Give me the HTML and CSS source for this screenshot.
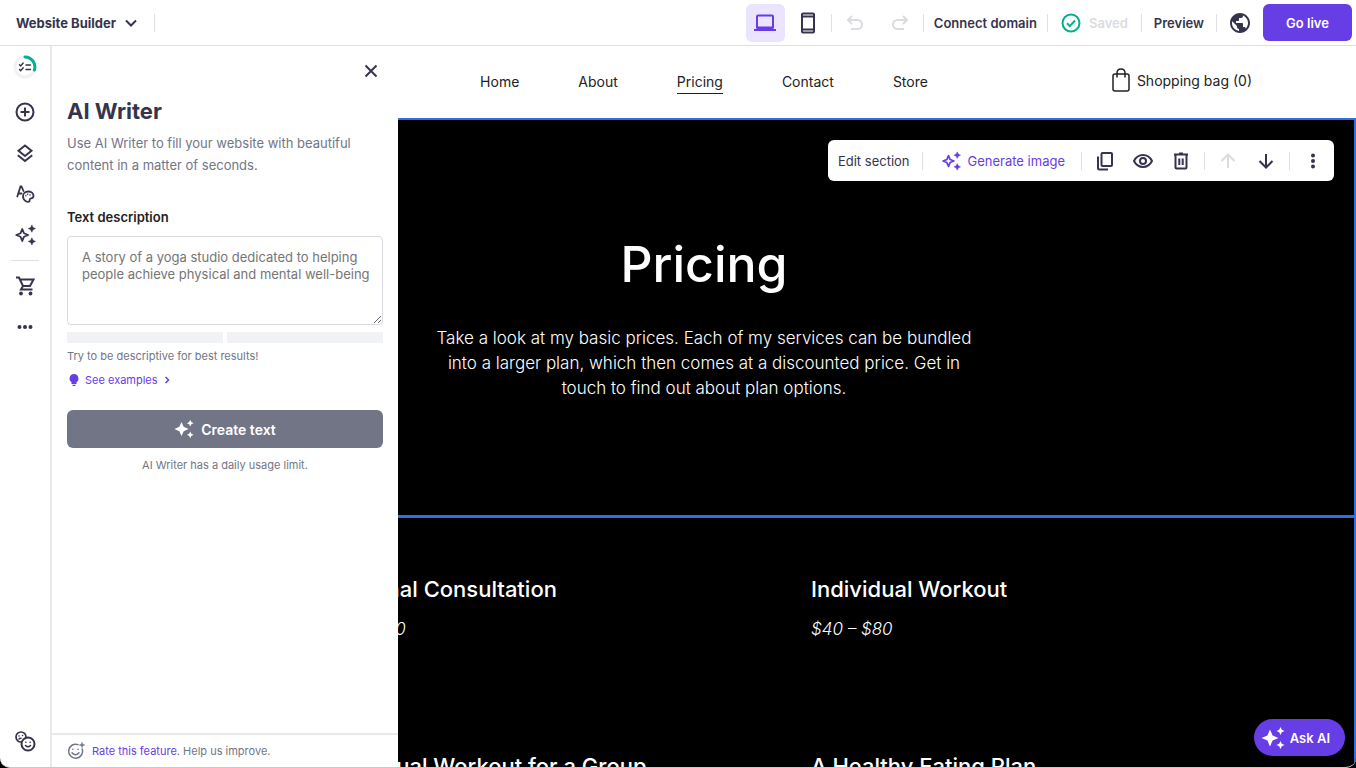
FILE: index.html
```html
<!DOCTYPE html>
<html lang="en">

<head>
    <meta charset="UTF-8">
    <meta name="viewport" content="width=device-width, initial-scale=1.0">
    <title>Website Builder</title>
    <link rel="stylesheet" href="styles.css">
</head>

<body>

    <!-- shared icon shapes -->
    <svg class="sprite" aria-hidden="true">
        <symbol id="sparkle-line" viewBox="0 0 24 24">
            <path d="M9 5.5l1.900 4.600L15.500 12l-4.600 1.900L9 18.500l-1.900-4.600L2.500 12l4.600-1.900z" fill="none" stroke="currentColor" stroke-width="2" stroke-linejoin="round" />
            <path d="M19.500 1l1.300 2.700L23.500 5l-2.700 1.300L19.500 9l-1.300-2.700L15.500 5l2.700-1.300zM19.500 15l1.300 2.700 2.700 1.300-2.700 1.300-1.300 2.700-1.300-2.700-2.700-1.300 2.700-1.300z" fill="currentColor" stroke="currentColor" stroke-width=".5" />
        </symbol>
        <symbol id="sparkle-solid" viewBox="0 0 24 24">
            <path d="M9 3.500l2.600 5.900L17.500 12l-5.900 2.600L9 20.500l-2.600-5.900L.5 12l5.900-2.600z" fill="currentColor" />
            <path d="M19.500 1l1.300 2.700L23.500 5l-2.700 1.300L19.500 9l-1.300-2.700L15.500 5l2.700-1.300zM19.500 15l1.300 2.700 2.700 1.300-2.700 1.300-1.300 2.700-1.300-2.700-2.700-1.300 2.700-1.300z" fill="currentColor" />
        </symbol>
    </svg>

    <div class="app">
        <header class="topbar">
            <button class="brand">Website Builder
                <svg width="12" height="8" viewBox="0 0 12 8"><path d="M1 1.500l5 5 5-5" class="line" /></svg>
            </button>
            <span class="sep"></span>

            <div class="topbar-right">
                <button class="device active" aria-label="Desktop">
                    <svg width="24" height="24" viewBox="0 0 24 24"><path d="M4 17V5.500q0-1 1-1h14q1 0 1 1V17" class="line" /><path d="M3.500 15.500h17V18H23v2H1v-2h2.500z" fill="currentColor" /></svg>
                </button>
                <button class="device" aria-label="Mobile">
                    <svg width="24" height="24" viewBox="0 0 24 24"><rect x="6" y="2.500" width="12" height="19" rx="1" class="line" /><path d="M6 5.500h12M6 18.500h12" class="line" /></svg>
                </button>
                <span class="sep"></span>
                <div class="history">
                    <button class="tool off" aria-label="Undo">
                        <svg width="20" height="20" viewBox="0 0 20 20"><path d="M7 3L3 7l4 4M3 7h9.500a4.500 4.500 0 0 1 0 9H6" class="line" /></svg>
                    </button>
                    <button class="tool off" aria-label="Redo">
                        <svg width="20" height="20" viewBox="0 0 20 20"><path d="M13 3l4 4-4 4M17 7H7.500a4.500 4.500 0 0 0 0 9H14" class="line" /></svg>
                    </button>
                </div>
                <span class="sep"></span>
                <button>Connect domain</button>
                <span class="sep"></span>
                <span class="saved">
                    <svg width="20" height="20" viewBox="0 0 20 20"><circle cx="10" cy="10" r="8.500" class="line" /><path d="M6 10.300l2.800 2.800L14 7.500" class="line" /></svg>
                    Saved
                </span>
                <span class="sep"></span>
                <button class="preview">Preview</button>
                <span class="sep"></span>
                <button class="tool" aria-label="Language">
                    <svg width="24" height="24" viewBox="0 0 24 24"><path d="M12 2C6.480 2 2 6.480 2 12s4.480 10 10 10 10-4.480 10-10S17.520 2 12 2zm-1 17.930c-3.950-.49-7-3.850-7-7.930 0-.62.080-1.210.210-1.790L9 15v1c0 1.100.9 2 2 2v1.930zm6.900-2.540c-.26-.81-1-1.390-1.900-1.390h-1v-3c0-.55-.45-1-1-1H8v-2h2c.55 0 1-.45 1-1V7h2c1.100 0 2-.9 2-2v-.41c2.930 1.190 5 4.060 5 7.410 0 2.080-.8 3.970-2.100 5.390z" fill="currentColor" /></svg>
                </button>
                <button class="golive">Go live</button>
            </div>
        </header>

        <div class="workspace">
            <nav class="rail" aria-label="Editor tools">
                <button class="checklist" aria-label="Setup checklist">
                    <svg width="24" height="24" viewBox="0 0 24 24" fill="none" stroke-linecap="round"><circle cx="12" cy="12" r="10" stroke="#f1f1f6" stroke-width="3" /><path d="M12 2a10 10 0 0 1 9.400 13" stroke="#00b090" stroke-width="3" /><path d="M6.500 9.800l1.200 1.200 2.500-3M6.500 14.500l1.200 1.200 2.500-3M13 10h4.500M13 14.500h4.500" stroke="currentColor" stroke-width="1.400" /></svg>
                </button>
                <button aria-label="Add elements">
                    <svg width="24" height="24" viewBox="0 0 24 24"><circle cx="12" cy="12" r="8.500" class="line" /><path d="M12 7.500v9M7.500 12h9" class="line" /></svg>
                </button>
                <button aria-label="Pages">
                    <svg width="24" height="24" viewBox="0 0 24 24"><path d="M12 4.500l6.500 5.200L12 15 5.500 9.700zM4.800 14.200L12 20l7.200-5.800" class="line" /></svg>
                </button>
                <button aria-label="Styles">
                    <svg width="24" height="24" viewBox="0 0 24 24" fill="none" stroke="currentColor" stroke-width="1.800" stroke-linecap="round"><path d="M4.300 14.500L7.500 4.500h1l2 4.500M5.500 11.500h3" /><path d="M15 9.500c3.300 0 5.500 2 5.500 4.300 0 1.700-1.200 2.500-2.500 2.500-1.600 0-1.200 1.500-1.500 2.700-.3 1.100-2.200 1.100-3.600.2-1.600-1-2.900-2.700-2.900-4.700 0-2.800 2.200-5 5-5z" /><path d="M12.800 13.800h.1M14.600 12.300h.1M17 13h.1" stroke-width="1.500" /></svg>
                </button>
                <button aria-label="AI tools">
                    <svg width="22" height="22"><use href="#sparkle-line" /></svg>
                </button>
                <hr>
                <button aria-label="Store">
                    <svg width="24" height="24" viewBox="0 0 24 24"><path d="M3 3.500h3l4 8.500h7l3.500-6.500H7M10 12l-2 3.500h11.500" class="line" /><circle cx="8" cy="19.500" r="1.900" fill="currentColor" /><circle cx="17.500" cy="19.500" r="1.900" fill="currentColor" /></svg>
                </button>
                <button aria-label="More">
                    <svg width="24" height="24" viewBox="0 0 24 24" fill="currentColor"><circle cx="6.500" cy="12" r="2" /><circle cx="12" cy="12" r="2" /><circle cx="17.500" cy="12" r="2" /></svg>
                </button>
                <button class="rail-last" aria-label="Feedback">
                    <svg width="24" height="24" viewBox="0 0 24 24" fill="none" stroke="currentColor" stroke-linecap="round"><circle cx="8" cy="8" r="5" stroke-width="1.700" /><path d="M6 7h.1M9.500 6.500h.1M6 10q1-1 2-.8" stroke-width="1.500" /><circle cx="15" cy="15" r="6.500" fill="#fff" stroke-width="2" /><path d="M12.800 13.300h.1M17.100 13.300h.1M12.500 16.500q2.500 2.600 5 0" stroke-width="1.600" /></svg>
                </button>
            </nav>

            <main class="stage">
                <div class="site-header">
                    <nav class="site-nav" aria-label="Site">
                        <a href="#">Home</a>
                        <a href="#">About</a>
                        <a href="#" class="current">Pricing</a>
                        <a href="#">Contact</a>
                        <a href="#">Store</a>
                    </nav>
                    <a href="#" class="bag">
                        <svg width="18" height="24" viewBox="0 0 18 24" fill="none" stroke="currentColor" stroke-width="1.500"><rect x="1" y="6" width="16" height="17" rx="2" /><path d="M5 9.500V5q0-4 4-4t4 4v4.500" /></svg>
                        Shopping bag (0)
                    </a>
                </div>

                <section class="hero">
                    <h1>Pricing</h1>
                    <p>Take a look at my basic prices. Each of my services can be bundled<br>into a larger plan, which then comes at a discounted price. Get in<br>touch to find out about plan options.</p>

                    <div class="section-menu">
                        <button class="edit">Edit section</button>
                        <span class="sep"></span>
                        <button class="generate"><svg width="20" height="20"><use href="#sparkle-line" /></svg>Generate image</button>
                        <span class="sep"></span>
                        <button class="icon" aria-label="Duplicate">
                            <svg width="20" height="20" viewBox="0 0 20 20"><rect x="6.500" y="2" width="10.500" height="13" rx="1" class="line" /><path d="M3 5.500V17q0 1.500 1.500 1.500H13" class="line" /></svg>
                        </button>
                        <button class="icon" aria-label="Hide">
                            <svg width="20" height="20" viewBox="0 0 20 20"><path d="M1 10q3-6 9-6t9 6q-3 6-9 6t-9-6z" class="line" /><circle cx="10" cy="10" r="3" class="line" /></svg>
                        </button>
                        <button class="icon" aria-label="Delete">
                            <svg width="20" height="20" viewBox="0 0 20 20"><path d="M4.500 4v12.500q0 1 1 1h9q1 0 1-1V4M3 3.500h14M8 2.500h4M8.300 7.500v6.500M11.700 7.500v6.500" class="line" /></svg>
                        </button>
                        <span class="sep"></span>
                        <button class="icon off" aria-label="Move up">
                            <svg width="20" height="20" viewBox="0 0 20 20"><path d="M10 17V3.500M3.500 10L10 3.500l6.500 6.500" class="line" /></svg>
                        </button>
                        <button class="icon" aria-label="Move down">
                            <svg width="20" height="20" viewBox="0 0 20 20"><path d="M10 3v13.500M3.500 10l6.500 6.500 6.500-6.500" class="line" /></svg>
                        </button>
                        <span class="sep"></span>
                        <button class="icon" aria-label="More actions">
                            <svg width="20" height="20" viewBox="0 0 20 20" fill="currentColor"><circle cx="10" cy="4.500" r="2" /><circle cx="10" cy="10" r="2" /><circle cx="10" cy="15.500" r="2" /></svg>
                        </button>
                    </div>
                </section>

                <section class="plans">
                    <article>
                        <h2>Personal Consultation</h2>
                        <p>$50 – $70</p>
                    </article>
                    <article>
                        <h2>Individual Workout</h2>
                        <p>$40 – $80</p>
                    </article>
                    <article>
                        <h2>Individual Workout for a Group</h2>
                    </article>
                    <article>
                        <h2>A Healthy Eating Plan</h2>
                    </article>
                </section>

                <aside class="panel">
                    <button class="close" aria-label="Close">
                        <svg width="14" height="14" viewBox="0 0 14 14"><path d="M1.500 1.500l11 11M12.500 1.500l-11 11" class="line" /></svg>
                    </button>
                    <form class="writer">
                        <h2>AI Writer</h2>
                        <p class="intro">Use AI Writer to fill your website with beautiful<br>content in a matter of seconds.</p>
                        <label for="description">Text description</label>
                        <textarea id="description" placeholder="A story of a yoga studio dedicated to helping people achieve physical and mental well-being"></textarea>
                        <div class="strength"><span></span><span></span></div>
                        <p class="hint">Try to be descriptive for best results!</p>
                        <a href="#" class="examples">
                            <svg width="14" height="14" viewBox="0 0 14 14" fill="currentColor"><path d="M7 1a4.500 4.500 0 0 1 2.500 8.200V11h-5V9.200A4.500 4.500 0 0 1 7 1zM5.500 11.800h3v1.200h-3z" /></svg>
                            See examples
                            <svg class="next" width="6" height="8" viewBox="0 0 6 8"><path d="M1.500 1l3 3-3 3" fill="none" stroke="currentColor" stroke-width="1.500" /></svg>
                        </a>
                        <button type="button" class="create"><svg width="20" height="20"><use href="#sparkle-solid" /></svg>Create text</button>
                        <p class="limit">AI Writer has a daily usage limit.</p>
                    </form>
                    <footer>
                        <svg width="18" height="18" viewBox="0 0 18 18" fill="none" stroke="currentColor" stroke-width="1.500" stroke-linecap="round"><path d="M11 2.600A7 7 0 1 0 15.300 7M15 1v4M13 3h4M5.800 7.300h.1M11 7.300h.1M5 10.800q3.500 4 7 0" /></svg>
                        <span><a href="#">Rate this feature</a>. Help us improve.</span>
                    </footer>
                </aside>
            </main>
        </div>

        <button class="ask"><svg width="24" height="24"><use href="#sparkle-solid" /></svg>Ask AI</button>
    </div>

</body>

</html>
```
FILE: styles.css
```css
* {
    box-sizing: border-box;
}

body {
    margin: 0;
    background: #000;
    color: #36344d;
    font-family: Inter, "Liberation Sans", sans-serif;
    font-size: 13px;
}

button {
    display: flex;
    align-items: center;
    padding: 0;
    border: 0;
    background: none;
    color: inherit;
    font: inherit;
    cursor: pointer;
}

a {
    color: inherit;
    text-decoration: none;
}

h1,
h2,
p {
    margin: 0;
}

svg {
    display: block;
    flex: none;
}

.sprite {
    position: absolute;
    width: 0;
    height: 0;
}

.line {
    fill: none;
    stroke: currentColor;
    stroke-width: 2;
}

.sep {
    width: 1px;
    height: 18px;
    background: #dfe0e6;
}

.off {
    color: #dadce0;
}

.app {
    display: flex;
    flex-direction: column;
    height: 100vh;
    overflow: hidden;
    border-bottom: 1px solid #c8c8c8;
    border-radius: 0 0 10px 10px;
    background: #fff;
}

/* top bar */
.topbar {
    display: flex;
    align-items: center;
    flex: none;
    gap: 17px;
    height: 46px;
    padding: 0 4px 0 16px;
    border-bottom: 1px solid #dedee3;
    font-weight: 600;
}

.brand {
    gap: 9px;
    font-weight: 700;
}

.topbar-right {
    display: flex;
    align-items: center;
    gap: 10px;
    margin-left: auto;
}

.device {
    justify-content: center;
    width: 39px;
    height: 38px;
    border-radius: 6px;
}

.device + .device {
    width: 26px;
}

.device.active {
    background: #ebe4ff;
    color: #673de6;
}

.history {
    display: flex;
    gap: 19px;
}

.tool {
    justify-content: center;
    width: 26px;
}

.saved {
    display: flex;
    align-items: center;
    gap: 8px;
    padding: 0 3px;
    color: #dadce0;
}

.saved svg {
    color: #00b090;
}

.preview {
    padding: 0 2px;
}

.golive {
    justify-content: center;
    width: 89px;
    height: 37px;
    border-radius: 6px;
    background: #673de6;
    color: #fff;
}

/* left rail */
.workspace {
    display: flex;
    flex: 1;
    min-height: 0;
}

.rail {
    display: flex;
    flex-direction: column;
    align-items: center;
    flex: none;
    gap: 17px;
    width: 52px;
    padding: 9px 0 14px;
    border-right: 2px solid #e9e9ed;
}

.rail button {
    justify-content: center;
    width: 24px;
    height: 24px;
}

.rail .checklist {
    margin-bottom: 4px;
}

.rail hr {
    width: 28px;
    height: 1px;
    margin: -4px 0;
    border: 0;
    background: #dfe0e6;
}

.rail .rail-last {
    margin-top: auto;
}

/* edited site */
.stage {
    position: relative;
    display: flex;
    flex-direction: column;
    flex: 1;
    min-width: 0;
    overflow: hidden;
    background: #000;
    color: #fff;
}

.site-header {
    display: grid;
    grid-template-columns: 1fr auto 1fr;
    align-items: center;
    flex: none;
    height: 72px;
    padding: 0 104px 4px;
    background: #fff;
    color: #222;
    font-size: 14px;
}

.site-nav {
    display: flex;
    grid-column: 2;
    gap: 59px;
}

.site-nav a {
    padding: 7px 0 3px;
    border-bottom: 1px solid transparent;
}

.site-nav .current {
    border-color: #222;
}

.bag {
    display: flex;
    align-items: center;
    justify-self: end;
    gap: 7px;
    white-space: nowrap;
}

.hero {
    position: relative;
    flex: none;
    padding: 111px 20px 114px;
    border: 2px solid #2f6fe0;
    border-bottom-width: 3px;
    text-align: center;
}

.hero h1 {
    margin-bottom: 29px;
    font-size: 50px;
    font-weight: 500;
    line-height: 66px;
}

.hero p {
    font-size: 17px;
    font-weight: 300;
    line-height: 25px;
}

.section-menu {
    position: absolute;
    top: 20px;
    right: 20px;
    display: flex;
    align-items: center;
    gap: 8px;
    height: 41px;
    padding: 0 6px 0 10px;
    border-radius: 6px;
    background: #fff;
    color: #36344d;
}

.section-menu .icon {
    justify-content: center;
    width: 30px;
}

.section-menu .edit {
    padding-right: 4px;
}

.section-menu .generate {
    gap: 7px;
    padding: 0 8px 0 10px;
    color: #673de6;
}

.section-menu .off {
    color: #dadce0;
}

.plans {
    display: grid;
    grid-template-columns: 1fr 1fr;
    grid-auto-rows: 177px;
    flex: 1 0 auto;
    padding: 57px 58px 0 274px;
    border-right: 2px solid #2f6fe0;
}

.plans h2 {
    margin-bottom: 14px;
    font-size: 22px;
    font-weight: 500;
    line-height: 28px;
    white-space: nowrap;
}

.plans p {
    font-size: 17px;
    font-style: italic;
    font-weight: 300;
    line-height: 25px;
}

/* AI writer panel */
.panel {
    position: absolute;
    top: 0;
    bottom: 0;
    left: 0;
    display: flex;
    flex-direction: column;
    width: 346px;
    background: #fff;
    color: #727586;
}

.close {
    align-self: flex-end;
    margin: 18px 20px 0;
    color: #36344d;
}

.writer {
    display: flex;
    flex-direction: column;
    flex: 1;
    padding: 18px 15px;
}

.writer h2 {
    margin-bottom: 6px;
    color: #36344d;
    font-size: 22px;
    font-weight: 700;
    line-height: 30px;
}

.intro {
    line-height: 22px;
}

.writer label {
    margin: 31px 0 9px;
    color: #222;
    font-weight: 600;
    line-height: 20px;
}

.writer textarea {
    height: 89px;
    padding: 12px 8px 12px 14px;
    border: 1px solid #d8dae0;
    border-radius: 4px;
    font-family: inherit;
    font-size: 13px;
    line-height: 17px;
}

.writer textarea::placeholder {
    color: #757575;
}

.strength {
    display: grid;
    grid-template-columns: 1fr 1fr;
    gap: 4px;
    margin: 7px 0 5px;
}

.strength span {
    height: 11px;
    background: #f1f2f6;
}

.hint,
.examples,
.limit,
.panel footer {
    font-size: 11px;
    line-height: 16px;
}

.examples {
    display: flex;
    align-items: center;
    gap: 4px;
    margin: 8px 0 22px;
    color: #673de6;
}

.examples .next {
    margin-left: 2px;
}

.create {
    justify-content: center;
    gap: 7px;
    height: 38px;
    border-radius: 6px;
    background: #727586;
    color: #fff;
    font-size: 14px;
    font-weight: 600;
}

.limit {
    margin-top: 9px;
    text-align: center;
}

.panel footer {
    display: flex;
    align-items: center;
    gap: 7px;
    height: 34px;
    padding: 0 15px;
    border-top: 2px solid #e9e9ed;
}

.panel footer a {
    color: #673de6;
}

/* floating assistant button */
.ask {
    position: fixed;
    right: 11px;
    bottom: 12px;
    gap: 5px;
    height: 37px;
    padding: 0 15px 0 7px;
    border-radius: 19px;
    background: #673de6;
    color: #fff;
    font-weight: 600;
}
```
